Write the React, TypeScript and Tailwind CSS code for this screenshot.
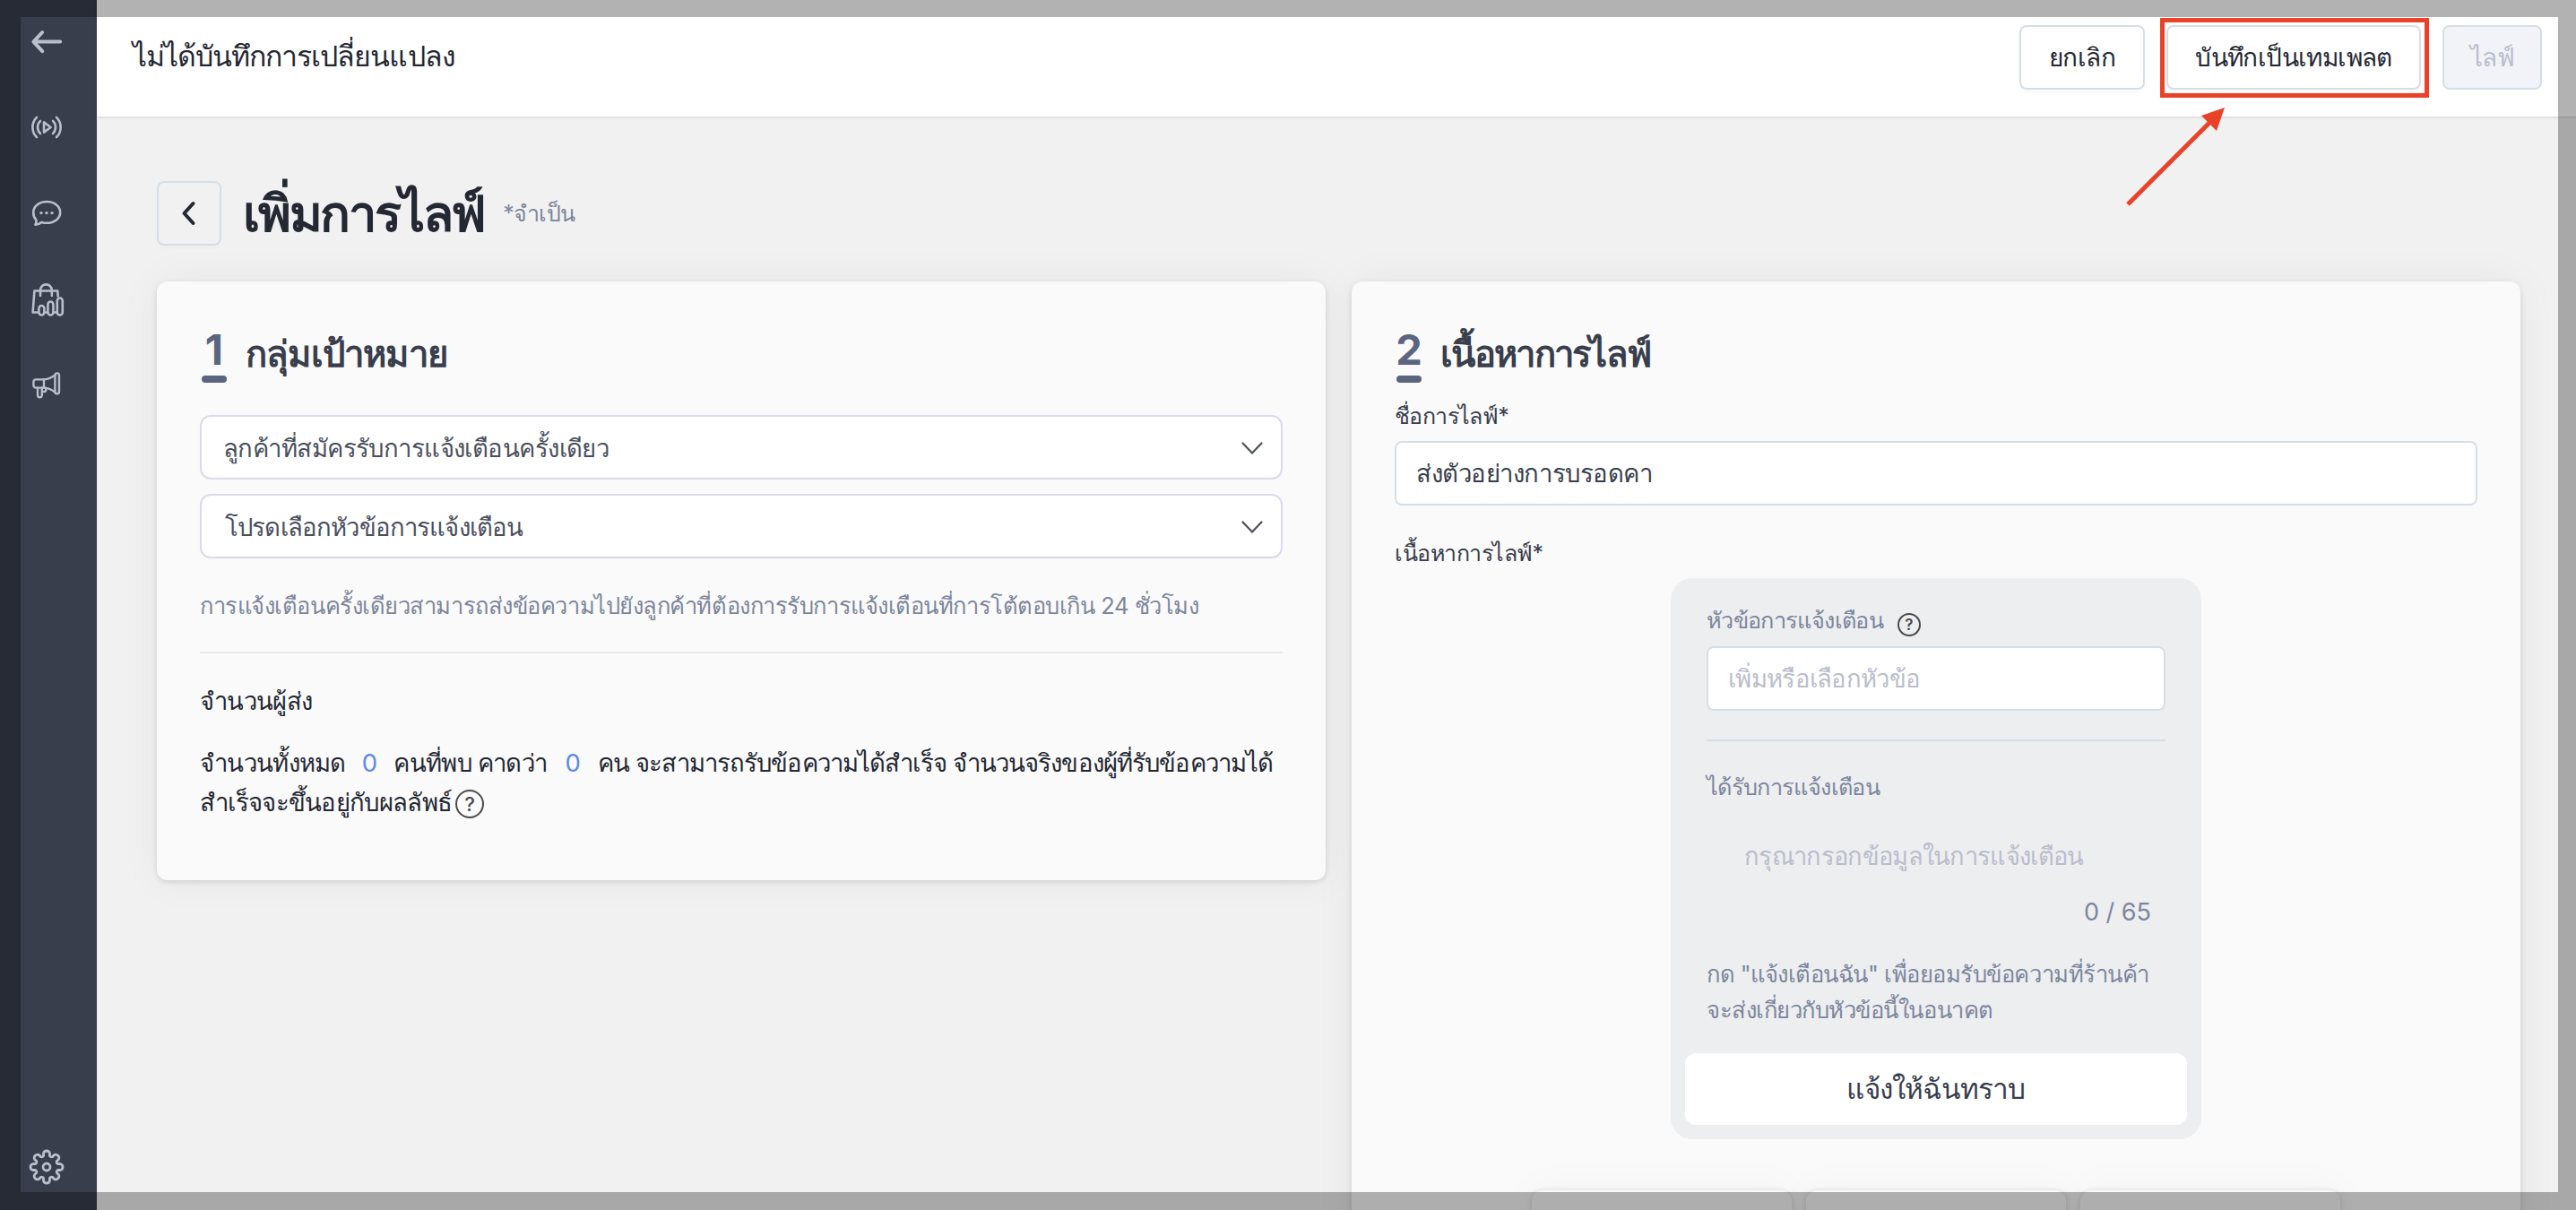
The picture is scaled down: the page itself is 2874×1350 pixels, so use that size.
import { useState } from 'react'

function BackArrowIcon() {
  return (
    <svg width="40" height="40" viewBox="0 0 40 40" fill="none" stroke="#b9bdcc" strokeWidth="4" strokeLinecap="round" strokeLinejoin="round">
      <path d="M35.2 19.6H5.8M15.2 9L5.4 19.6l9.8 10.6" />
    </svg>
  )
}

function LiveIcon() {
  return (
    <svg width="40" height="40" viewBox="0 0 40 40" fill="none" stroke="#b9bdcc" strokeWidth="2.6" strokeLinecap="round" strokeLinejoin="round">
      <path d="M9 8.8C2.8 15 2.8 25 9 31.2M31 8.8c6.2 6.2 6.2 16.2 0 22.4" />
      <path d="M13 12.8c-4 4-4 10.4 0 14.4M27 12.8c4 4 4 10.4 0 14.4" />
      <path d="M17 14.4v11.2l7.6-5.6z" />
    </svg>
  )
}

function ChatIcon() {
  return (
    <svg width="40" height="40" viewBox="0 0 40 40" fill="none" stroke="#b9bdcc" strokeWidth="2.6" strokeLinecap="round" strokeLinejoin="round">
      <path d="M8.2 27.2C6 25 5.2 22 5.2 19 5.2 12.2 11.8 7 20.2 7s15 5.2 15 12-6.6 11.8-15 11.8c-2 0-4-.3-5.8-.9-2 1.7-4.6 2.8-7 2.7 1-1.6 1.4-3.6.8-5.4z" />
      <g fill="#b9bdcc" stroke="none">
        <circle cx="14" cy="19.6" r="1.7" />
        <circle cx="20" cy="19.6" r="1.7" />
        <circle cx="26" cy="19.6" r="1.7" />
      </g>
    </svg>
  )
}

function BagIcon() {
  return (
    <svg width="40" height="40" viewBox="0 0 40 40" fill="none" stroke="#b9bdcc" strokeWidth="2.6" strokeLinecap="round" strokeLinejoin="round">
      <path d="M11 34.5H4.6L6.4 10.5h25.8l.5 6" />
      <path d="M13 16V9.8a6.400 6.400 0 0 1 12.800 0V16" />
      <rect x="11.4" y="27" width="6" height="10.5" rx="3" />
      <rect x="21.4" y="22.5" width="6" height="15" rx="3" />
      <rect x="31.8" y="18.5" width="6" height="19" rx="3" />
      <path d="M17.6 34.5h3.8M27.6 34.5h4.2" />
    </svg>
  )
}

function MegaphoneIcon() {
  return (
    <svg width="40" height="40" viewBox="0 0 40 40" fill="none" stroke="#b9bdcc" strokeWidth="2.4" strokeLinecap="round" strokeLinejoin="round">
      <path d="M17 13.4H8A2.6 2.6 0 0 0 5.4 16v4A2.6 2.6 0 0 0 8 22.6h9z" />
      <path d="M17 13.4c5-.4 9-2.2 12.4-5M17 22.6c5 .4 9 2.2 12.4 5" />
      <rect x="29.4" y="6.4" width="4.6" height="23" rx="2.3" />
      <path d="M10 22.6v8.2a2.3 2.3 0 0 0 4.8 0v-8.2M14.8 27h2.4a2 2 0 0 0 2-2v-2" />
    </svg>
  )
}

// eight rounded teeth around the centre of a 40x40 box
function gearPath() {
  const point = (r: number, deg: number) => {
    const a = (deg * Math.PI) / 180
    return `${(20 + r * Math.sin(a)).toFixed(2)} ${(20 - r * Math.cos(a)).toFixed(2)}`
  }
  let d = `M${point(13, -15)}`
  for (let i = 0; i < 8; i++) {
    const c = i * 45
    d += `L${point(15.6, c - 13)}A3.6 3.6 0 0 1 ${point(15.6, c + 13)}`
    d += `L${point(13, c + 15)}A3 3 0 0 0 ${point(13, c + 30)}`
  }
  return d + 'Z'
}

function GearIcon() {
  return (
    <svg width="40" height="40" viewBox="0 0 40 40" fill="none" stroke="#b9bdcc" strokeWidth="2.8" strokeLinejoin="round">
      <path d={gearPath()} />
      <circle cx="20" cy="20" r="4" />
    </svg>
  )
}

function Sidebar() {
  return (
    <nav className="flex w-[108px] shrink-0 flex-col bg-[#393e4d] pt-[27px] pb-7 pl-8">
      <BackArrowIcon />
      <div className="mt-[55px] flex flex-col gap-14">
        <LiveIcon />
        <ChatIcon />
        <BagIcon />
        <MegaphoneIcon />
      </div>
      <div className="mt-auto">
        <GearIcon />
      </div>
    </nav>
  )
}

function Header() {
  return (
    <header className="relative flex h-[130px] shrink-0 items-start bg-white pt-7 pr-[38px] pl-10 shadow-[0_1px_3px_rgba(0,0,0,0.12)]">
      <p className="mt-[13px] text-[32px] leading-[44px] tracking-[-0.97px] text-[#242833]">ไม่ได้บันทึกการเปลี่ยนแปลง</p>
      <div className="ml-auto flex gap-6 text-[28px] leading-[68px] tracking-[-0.6px]">
        <button className="h-[72px] w-[140px] rounded-lg border-2 border-[#d5dee7] bg-white text-[#242833] shadow-[0_4px_2px_rgba(0,0,0,0.02)]">
          ยกเลิก
        </button>
        <div className="relative">
          <button className="h-[72px] w-[284px] rounded-lg border-2 border-[#d5dee7] bg-white text-[#242833] shadow-[0_4px_2px_rgba(0,0,0,0.02)]">
            บันทึกเป็นเทมเพลต
          </button>
          <div className="absolute -top-2 -left-[7px] h-[89px] w-[300px] border-5 border-[#ea4228]" />
          <svg className="absolute top-[90px] -left-[50px]" width="120" height="116" viewBox="0 0 120 116">
            <path d="M7 110L99 18" stroke="#ea4228" strokeWidth="5" />
            <path d="M115 2L89 11l17 17z" fill="#ea4228" />
          </svg>
        </div>
        <button disabled className="h-[72px] w-[111px] rounded-lg border-2 border-[#d5dee7] bg-[#f2f3f8] text-[#b9bdcc]">
          ไลฟ์
        </button>
      </div>
    </header>
  )
}

function StepNumber({ value }: { value: string }) {
  return (
    <div className="ml-0.5 flex w-7 flex-col items-center">
      <span className="text-[47px] leading-[48px] font-bold text-[#5b6580]">{value}</span>
      <span className="mt-[5px] h-2 w-7 rounded-[4px] bg-[#5b6580]" />
    </div>
  )
}

function Select({ children }: { children: React.ReactNode }) {
  return (
    <div className="flex h-[72px] items-center justify-between rounded-xl border-2 border-[#d9dbe9] bg-white pt-0.5 pr-5 pl-6 text-[#4a4f5e]">
      {children}
      <svg width="24" height="16" viewBox="0 0 24 16" fill="none" stroke="#4a4f5e" strokeWidth="2.2" strokeLinecap="round">
        <path d="M1.5 2.5L12 13.5l10.5-11" />
      </svg>
    </div>
  )
}

function TargetCard() {
  return (
    <section className="h-[668px] w-[1304px] rounded-xl bg-[#fafafa] px-12 pt-[52px] shadow-[0_2px_6px_rgba(0,0,0,0.12),0_0_48px_rgba(0,0,0,0.05)]">
      <div className="flex h-[61px] items-start">
        <StepNumber value="1" />
        <h2 className="ml-[21px] text-[40px] leading-[57px] font-bold tracking-[-0.8px] text-[#393e4d]">กลุ่มเป้าหมาย</h2>
      </div>
      <div className="mt-9 flex flex-col gap-4">
        <Select>
          <span className="text-[27.5px] leading-[44px] tracking-[-0.56px]">ลูกค้าที่สมัครรับการแจ้งเตือนครั้งเดียว</span>
        </Select>
        <Select>
          <span className="ml-0.5 text-[27.5px] leading-[44px] tracking-[-0.85px]">โปรดเลือกหัวข้อการแจ้งเตือน</span>
        </Select>
      </div>
      <p className="mt-[30px] text-[25.5px] leading-[45px] tracking-[-0.45px] whitespace-nowrap text-[#7d869c]">
        การแจ้งเตือนครั้งเดียวสามารถส่งข้อความไปยังลูกค้าที่ต้องการรับการแจ้งเตือนที่การโต้ตอบเกิน 24 ชั่วโมง
      </p>
      <hr className="mt-[29px] border-t-2 border-[#ebebec]" />
      <h3 className="mt-8 text-[27.3px] leading-[44px] tracking-[-0.7px] text-[#242833]">จำนวนผู้ส่ง</h3>
      <div className="mt-6 text-[27.5px] leading-[44px] tracking-[-0.7px] whitespace-nowrap text-[#242833]">
        <p>
          จำนวนทั้งหมด<span className="mr-[19px] ml-[18px] text-[#5c8ae6]">0</span>คนที่พบ คาดว่า
          <span className="mr-5 ml-5 text-[#5c8ae6]">0</span>
          <span className="tracking-[-0.88px]">คน จะสามารถรับข้อความได้สำเร็จ จำนวนจริงของผู้ที่รับข้อความได้</span>
        </p>
        <p className="flex items-center">
          สำเร็จจะขึ้นอยู่กับผลลัพธ์
          <span className="mt-1 ml-1 flex size-8 items-center justify-center rounded-full border-[2.5px] border-[#4a4a4a] text-[22px] leading-none font-medium tracking-normal text-[#4a4a4a]">
            ?
          </span>
        </p>
      </div>
    </section>
  )
}

function NotifyPreview() {
  const [topic, setTopic] = useState('')

  return (
    <div className="mx-auto mt-2.5 h-[626px] w-[592px] rounded-[24px] bg-[#edeef0] px-4 pt-[29px]">
      <div className="px-6 text-[25.3px] tracking-[-0.65px] text-[#7d869c]">
        <div className="flex h-9 items-start">
          <span className="leading-9">หัวข้อการแจ้งเตือน</span>
          <span className="mt-[10px] ml-4 flex size-[26px] items-center justify-center rounded-full border-[2.5px] border-[#4a4a4a] text-[17px] leading-none font-semibold tracking-normal text-[#4a4a4a]">
            ?
          </span>
        </div>
        <input
          value={topic}
          onChange={(e) => setTopic(e.target.value)}
          placeholder="เพิ่มหรือเลือกหัวข้อ"
          className="mt-[11px] block h-[72px] w-full rounded-lg border-2 border-[#d5dee7] bg-white px-[22px] text-[27.5px] tracking-[-0.7px] text-[#393e4d] placeholder:text-[#b9bdcc]"
        />
        <hr className="mt-8 border-t-2 border-[#d5dee7]" />
        <p className="mt-[33px] leading-9">ได้รับการแจ้งเตือน</p>
        <p className="mt-[42px] pl-[42px] text-[27.3px] leading-9 tracking-[-0.68px] text-[#b9bdcc]">กรุณากรอกข้อมูลในการแจ้งเตือน</p>
        <p className="mt-[26px] pr-4 text-right text-[27px] leading-9 tracking-normal">0 / 65</p>
        <p className="mt-[31px] text-[25.6px] leading-10 tracking-[-0.47px] whitespace-nowrap">
          กด "แจ้งเตือนฉัน" เพื่อยอมรับข้อความที่ร้านค้า
          <br />
          จะส่งเกี่ยวกับหัวข้อนี้ในอนาคต
        </p>
      </div>
      <button className="mt-7 h-20 w-full rounded-xl bg-white text-[31.5px] leading-[78px] tracking-[-0.8px] text-[#393e4d]">แจ้งให้ฉันทราบ</button>
    </div>
  )
}

function ContentCard() {
  const [name, setName] = useState('ส่งตัวอย่างการบรอดคา')

  return (
    <section className="h-[1100px] w-[1304px] rounded-xl bg-[#fafafa] px-12 pt-[52px] shadow-[0_2px_6px_rgba(0,0,0,0.12),0_0_48px_rgba(0,0,0,0.05)]">
      <div className="flex h-[61px] items-start">
        <StepNumber value="2" />
        <h2 className="ml-[21px] text-[40px] leading-[57px] font-bold tracking-[-1.7px] text-[#393e4d]">เนื้อหาการไลฟ์</h2>
      </div>
      <label className="mt-[18px] block text-[25px] leading-[38px] tracking-[-0.6px] text-[#393e4d]">ชื่อการไลฟ์*</label>
      <input
        value={name}
        onChange={(e) => setName(e.target.value)}
        className="mt-[9px] block h-[72px] w-full rounded-lg border-2 border-[#d5dee7] bg-white px-[22px] text-[27.5px] tracking-[-0.45px] text-[#393e4d]"
      />
      <label className="mt-[35px] block text-[25px] leading-9 tracking-[-0.5px] text-[#393e4d]">เนื้อหาการไลฟ์*</label>
      <NotifyPreview />
      <div className="mt-[57px] flex justify-center gap-4">
        {[0, 1, 2].map((i) => (
          <div key={i} className="h-40 w-[290px] rounded-xl bg-[#fafafa] shadow-[0_1px_6px_rgba(0,0,0,0.14),0_0_48px_rgba(0,0,0,0.04)]" />
        ))}
      </div>
    </section>
  )
}

export default function App() {
  return (
    <div className="relative flex h-[1350px] w-[2874px] overflow-hidden bg-[#f1f1f1] font-['Inter','Noto_Sans',sans-serif]">
      <Sidebar />
      <div className="flex flex-1 flex-col">
        <Header />
        <main className="pt-[72px] pl-[67px]">
          <div className="flex h-[72px] items-start">
            <button className="flex size-[72px] items-center justify-center rounded-lg border-2 border-[#d5dee7] shadow-[0_4px_2px_rgba(0,0,0,0.01)]">
              <svg width="20" height="30" viewBox="0 0 20 30" fill="none" stroke="#242833" strokeWidth="4" strokeLinecap="round" strokeLinejoin="round">
                <path d="M14.5 4L4.5 15l10 11" />
              </svg>
            </button>
            <h1 className="ml-6 text-[56px] leading-[73px] font-bold tracking-[-2.2px] text-[#242833]">เพิ่มการไลฟ์</h1>
            <span className="ml-5 text-[25px] leading-[73px] tracking-[-0.7px] text-[#7d869c]">*จำเป็น</span>
          </div>
          <div className="mt-10 flex items-start gap-[29px]">
            <TargetCard />
            <ContentCard />
          </div>
        </main>
      </div>
      {/* dimmed frame around the window */}
      <div className="pointer-events-none absolute inset-0 border-t-[19px] border-r-[20px] border-b-[20px] border-l-[23px] border-black/30" />
    </div>
  )
}
